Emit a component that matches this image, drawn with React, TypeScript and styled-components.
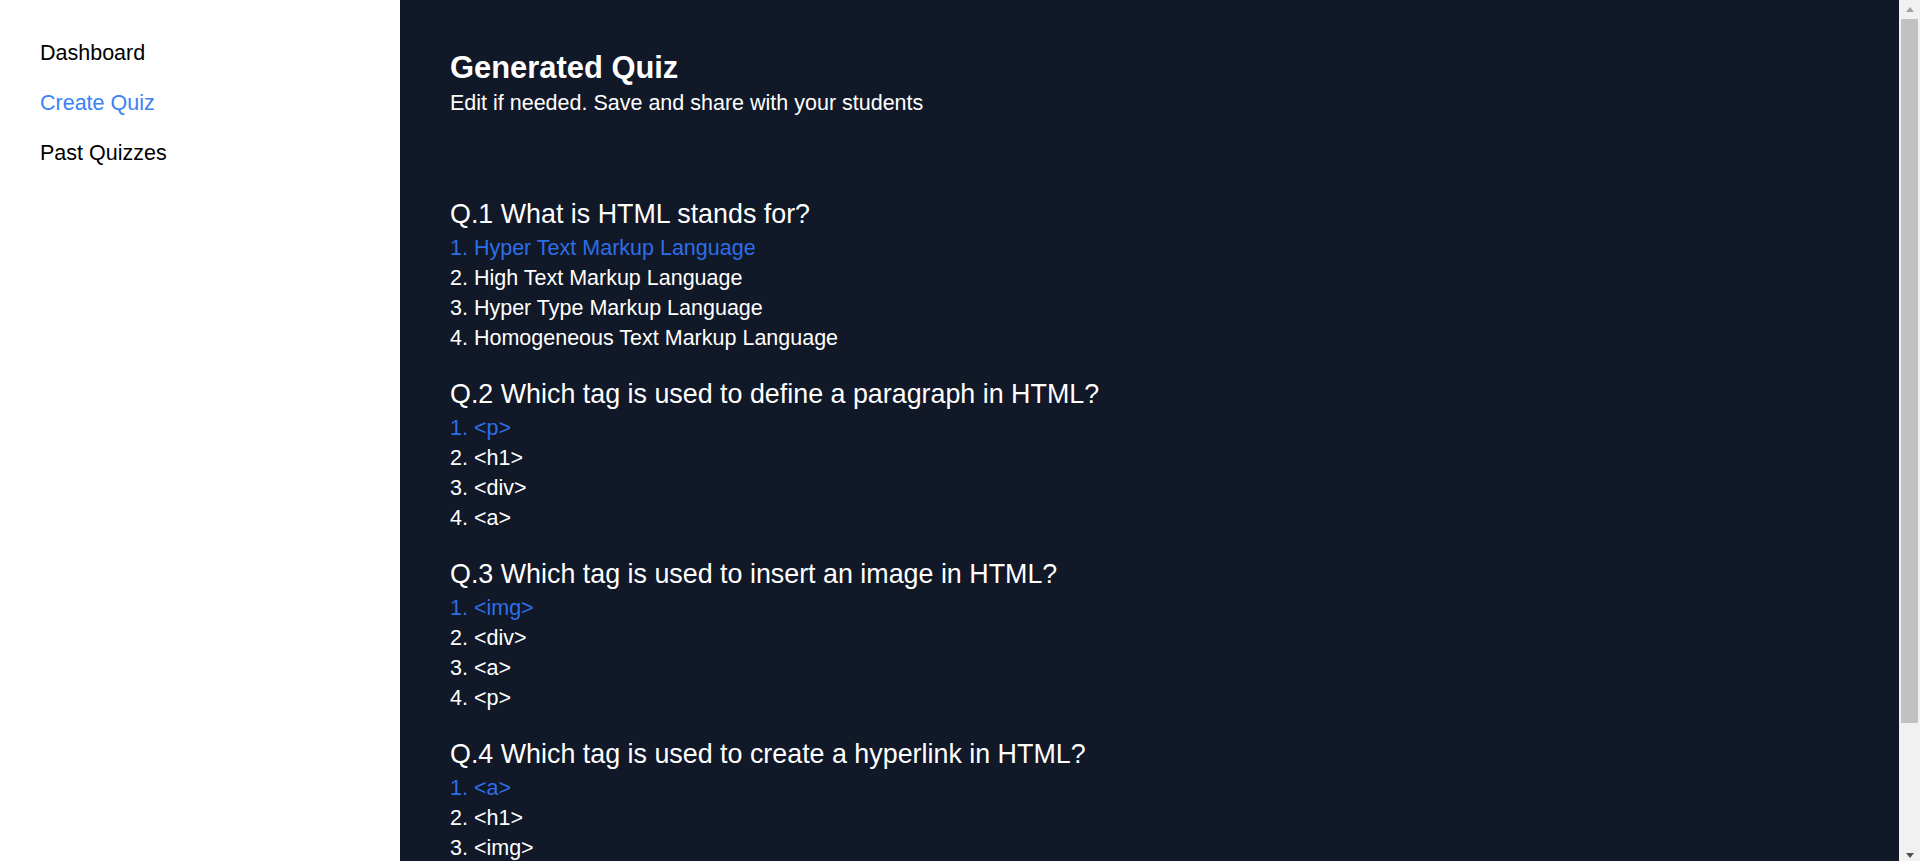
import React from "react";
import styled, { createGlobalStyle } from "styled-components";

const GlobalStyle = createGlobalStyle`
  html, body {
    margin: 0;
    padding: 0;
    background: #111827;
  }
  body {
    font-family: "Liberation Sans", Arial, sans-serif;
  }
`;

const Page = styled.div`
  display: flex;
  height: 100vh;
  overflow: hidden;
`;

const Layout = styled.div`
  flex: 1;
  display: flex;
  min-width: 0;
`;

const Sidebar = styled.nav`
  width: 400px;
  flex-shrink: 0;
  background: #ffffff;
  box-sizing: border-box;
  padding: 38px 0 0 40px;
  display: flex;
  flex-direction: column;
  gap: 20px;
`;

const NavItem = styled.a<{ $active?: boolean }>`
  font-size: 21.5px;
  line-height: 30px;
  color: ${(p) => (p.$active ? "#3b82f6" : "#000000")};
  text-decoration: none;
  cursor: pointer;
`;

const Main = styled.main`
  flex: 1;
  background: #111827;
  color: #ffffff;
  box-sizing: border-box;
  padding: 48px 50px 60px 50px;
`;

const Title = styled.h1`
  margin: 0;
  font-size: 30.9px;
  line-height: 40px;
  font-weight: 700;
`;

const Subtitle = styled.p`
  margin: 0;
  font-size: 21.5px;
  line-height: 31px;
`;

const QuestionList = styled.div`
  margin-top: 76.5px;
  display: flex;
  flex-direction: column;
  gap: 23px;
`;

const QuestionBlock = styled.section`
  display: flex;
  flex-direction: column;
`;

const QuestionText = styled.h2`
  margin: 0 0 1px 0;
  font-size: 26.85px;
  line-height: 36px;
  font-weight: 400;
`;

const Answer = styled.div<{ $correct?: boolean }>`
  font-size: 21.5px;
  line-height: 30px;
  color: ${(p) => (p.$correct ? "#2d6ee8" : "#ffffff")};
`;

const ScrollRail = styled.div`
  width: 21px;
  flex-shrink: 0;
  background: #f1f1f1;
  display: flex;
  flex-direction: column;
`;

const ArrowButton = styled.div<{ $down?: boolean }>`
  height: 17px;
  display: flex;
  justify-content: center;
  box-sizing: border-box;
  padding-top: ${(p) => (p.$down ? "9px" : "7px")};
`;

const Triangle = styled.span<{ $down?: boolean }>`
  width: 0;
  height: 0;
  border-left: 4.5px solid transparent;
  border-right: 4.5px solid transparent;
  ${(p) =>
    p.$down
      ? "border-top: 5px solid #505050;"
      : "border-bottom: 5px solid #a3a3a3;"}
`;

const ScrollTrack = styled.div`
  flex: 1;
  padding: 2px 2px 0 2px;
`;

const ScrollThumb = styled.div`
  height: 704px;
  background: #c1c1c1;
`;

const questions = [
  {
    q: "What is HTML stands for?",
    a: [
      "Hyper Text Markup Language",
      "High Text Markup Language",
      "Hyper Type Markup Language",
      "Homogeneous Text Markup Language",
    ],
  },
  {
    q: "Which tag is used to define a paragraph in HTML?",
    a: ["<p>", "<h1>", "<div>", "<a>"],
  },
  {
    q: "Which tag is used to insert an image in HTML?",
    a: ["<img>", "<div>", "<a>", "<p>"],
  },
  {
    q: "Which tag is used to create a hyperlink in HTML?",
    a: ["<a>", "<h1>", "<img>", "<p>"],
  },
];

export default function App() {
  return (
    <>
      <GlobalStyle />
      <Page>
        <Layout>
          <Sidebar>
            <NavItem>Dashboard</NavItem>
            <NavItem $active>Create Quiz</NavItem>
            <NavItem>Past Quizzes</NavItem>
          </Sidebar>
          <Main>
            <Title>Generated Quiz</Title>
            <Subtitle>Edit if needed. Save and share with your students</Subtitle>
            <QuestionList>
              {questions.map((item, i) => (
                <QuestionBlock key={i}>
                  <QuestionText>
                    Q.{i + 1} {item.q}
                  </QuestionText>
                  {item.a.map((ans, j) => (
                    <Answer key={j} $correct={j === 0}>
                      {j + 1}. {ans}
                    </Answer>
                  ))}
                </QuestionBlock>
              ))}
            </QuestionList>
          </Main>
        </Layout>
        <ScrollRail>
          <ArrowButton>
            <Triangle />
          </ArrowButton>
          <ScrollTrack>
            <ScrollThumb />
          </ScrollTrack>
          <ArrowButton $down>
            <Triangle $down />
          </ArrowButton>
        </ScrollRail>
      </Page>
    </>
  );
}
